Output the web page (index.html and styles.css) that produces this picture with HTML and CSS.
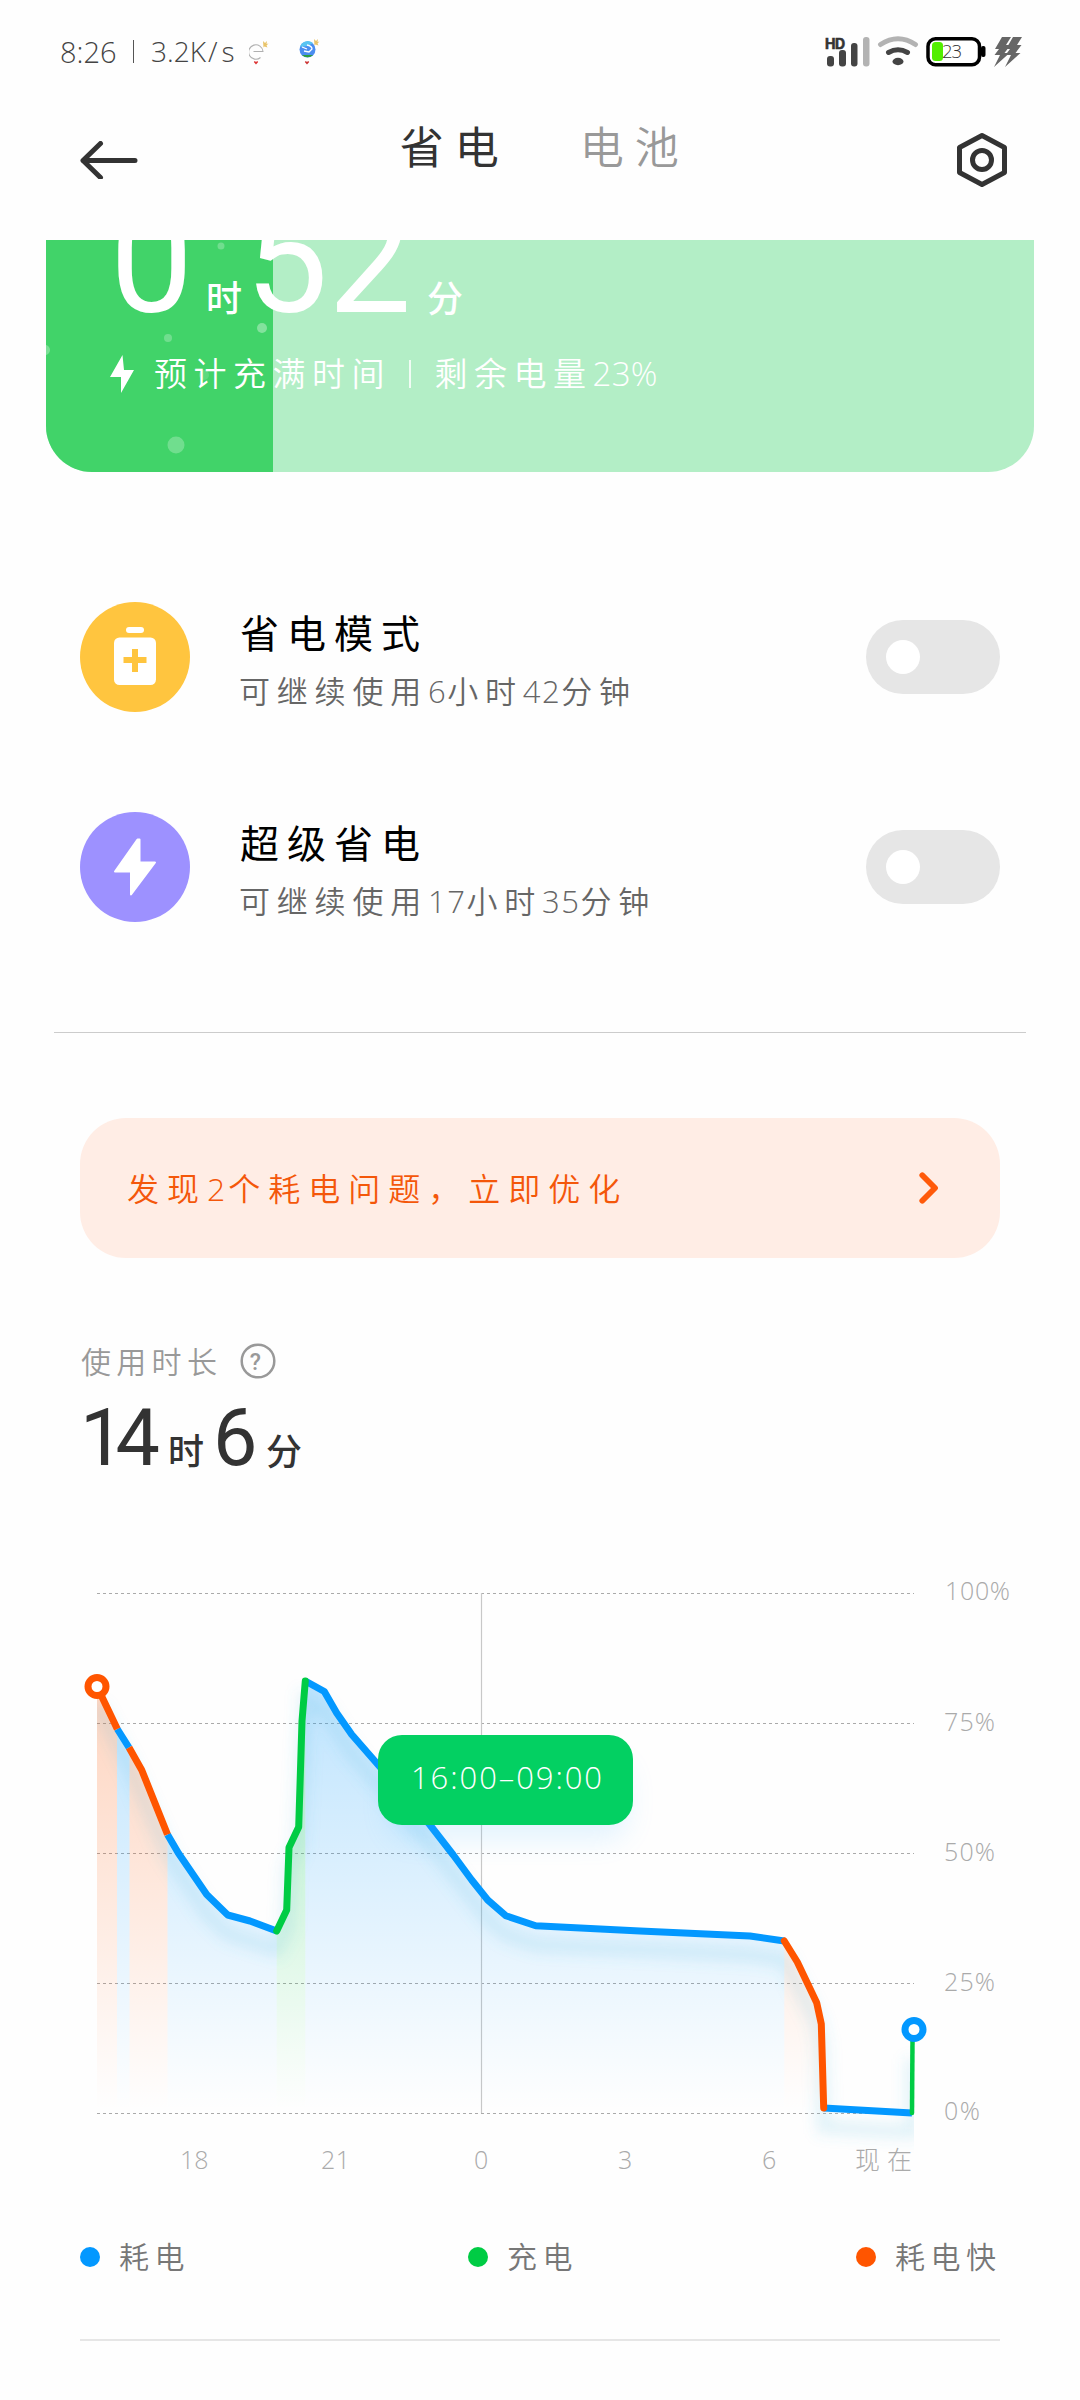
FILE: index.html
```html
<!DOCTYPE html>
<html lang="zh-CN">
<head>
<meta charset="utf-8">
<title>省电</title>
<link rel="stylesheet" href="styles.css">
</head>
<body>
<header class="status">
  <div class="status-left">
    <span class="clock">8:26</span><span class="bar"></span><span class="speed">3.2K<i>/</i>s</span>
    <svg class="note" width="22" height="26" viewBox="0 0 22 26"><path d="M4.500 12.500H14A7.200 7.200 0 1 0 11.500 18.500" fill="none" stroke="#b0b0b0" stroke-width="1.100"/><path d="M14 2l2 2 2-2-.5 3 2-.5-2 2 1 2-3-1-1 1z" fill="#e9c46a"/><path d="M7 25.500l-2.200-2.500 1-1 1.200 1 1.200-1 1 1z" fill="#d33"/></svg>
    <svg class="note" width="22" height="27" viewBox="0 0 22 27"><circle cx="8.500" cy="11.500" r="8" fill="#4b8df0"/><path d="M1 9a8 8 0 0 1 13-4L9 8z" fill="#58c4f2"/><path d="M3 17h11a8 8 0 0 1-11 0z" fill="#2f9e3f"/><path d="M3 9l5 2M8 7q5 1 5 4l-3 3-5-1" fill="none" stroke="#fff" stroke-width="1.300"/><path d="M15 1l2 2 2-2-.5 3 2-.5-2 2 1 2-3-1-1 1z" fill="#e9c46a"/><path d="M8 26.500l-2.200-2.500 1-1 1.200 1 1.200-1 1 1z" fill="#c33"/></svg>
  </div>
  <svg class="status-right" width="200" height="34" viewBox="825 35 200 34">
    <text class="hd" x="825" y="49" textLength="20">HD</text>
    <g fill="#444"><rect x="827" y="56" width="7" height="10.500" rx="3"/><rect x="839" y="50" width="7" height="16.500" rx="3"/><rect x="851" y="43" width="6.500" height="23.500" rx="3"/></g>
    <rect x="863" y="37" width="6.500" height="29.500" rx="3" fill="#b3b3b3"/>
    <path d="M880.500 44.500Q898 33 915.500 44.500" fill="none" stroke="#b3b3b3" stroke-width="5" stroke-linecap="round"/>
    <path d="M888.500 52.500Q898 47 907.500 52.500" fill="none" stroke="#444" stroke-width="5" stroke-linecap="round"/>
    <ellipse cx="898" cy="61.500" rx="5.500" ry="3.700" fill="#444"/>
    <rect x="928" y="38.700" width="51.500" height="26" rx="7.500" fill="#fff" stroke="#000" stroke-width="3.500"/>
    <rect x="981" y="46" width="4.500" height="11" rx="2" fill="#000"/>
    <rect x="932" y="42" width="11" height="19" rx="3.500" fill="#52ee00"/>
    <text class="pct" x="942" y="58" textLength="20">23</text>
    <path d="M1002 37h9l-5 8h4.500l-6 8h5l-15.500 14 6-12h-5.500l4.500-6h-4z" fill="#666"/>
    <path d="M1013 37h9l-5 8h4.500l-6 8h5l-15.500 14 6-12h-5.500l4.500-6h-4z" fill="#666"/>
  </svg>
</header>
<nav class="top">
  <svg width="58" height="38" viewBox="0 0 58 38"><path d="M20.500 2.500L3 19.500 20.500 36.500M3 19.500H55" fill="none" stroke="#333" stroke-width="5" stroke-linecap="round" stroke-linejoin="round"/></svg>
  <div class="tabs"><span class="tab on">省电</span><span class="tab">电池</span></div>
  <svg width="50" height="56" viewBox="0 0 50 56"><path d="M25 3.500L47.500 15.500V40.500L25 52.500 2.500 40.500V15.500Z" fill="none" stroke="#333" stroke-width="5" stroke-linejoin="round"/><circle cx="25" cy="28" r="9.500" fill="none" stroke="#333" stroke-width="5"/></svg>
</nav>
<main>
  <section class="card">
    <svg class="bubbles" width="227" height="232" viewBox="0 0 227 232"><rect width="227" height="232" fill="#41d369"/><g fill="#fff"><circle cx="175" cy="6" r="3.500" opacity=".25"/><circle cx="216" cy="88" r="5" opacity=".35"/><circle cx="122" cy="98" r="4" opacity=".25"/><circle cx="-1" cy="110" r="5" opacity=".3"/><circle cx="158" cy="135" r="5" opacity=".15"/><circle cx="130" cy="205" r="8.500" opacity=".25"/></g></svg>
    <div class="big"><b>0</b><em>时</em><b class="b2">52</b><em class="e2">分</em></div>
    <div class="eta">
      <svg width="24" height="38" viewBox="0 0 24 38"><path d="M12.500 0L0 22H11V38L24 15H14Z" fill="#fff"/></svg>
      <span class="e-a">预计充满时间</span><span class="e-bar"></span><span class="e-b">剩余电量<i>23%</i></span>
    </div>
  </section>
  <section class="mode">
    <svg width="110" height="110" viewBox="0 0 110 110"><circle cx="55" cy="55" r="55" fill="#ffc53f"/><rect x="46" y="25" width="18" height="6" rx="3" fill="#fff"/><rect x="34" y="35.500" width="42" height="47.500" rx="5.500" fill="#fff"/><path d="M43.500 58h23M55 47v23" stroke="#ffc53f" stroke-width="6"/></svg>
    <div class="mode-text"><h2>省电模式</h2><p>可继续使用<i>6</i>小时<i>42</i>分钟</p></div>
    <span class="toggle"></span>
  </section>
  <section class="mode">
    <svg width="110" height="110" viewBox="0 0 110 110"><circle cx="55" cy="55" r="55" fill="#9d91ff"/><path d="M57.500 27.500L35 59.500H51V82.500L75 50.500H59.500V27.500Z" fill="#fff" stroke="#fff" stroke-width="2" stroke-linejoin="round"/></svg>
    <div class="mode-text"><h2>超级省电</h2><p>可继续使用<i>17</i>小时<i>35</i>分钟</p></div>
    <span class="toggle"></span>
  </section>
  <hr class="rule">
  <section class="alert"><span>发现<i>2</i>个耗电问题，立即优化</span><svg width="20" height="32" viewBox="0 0 20 32"><path d="M3.300 3.300L16 16 3.300 28.700" fill="none" stroke="#ff5a0a" stroke-width="5.800" stroke-linecap="round" stroke-linejoin="round"/></svg></section>
  <section class="usage">
    <div class="usage-label"><span>使用时长</span><svg width="36" height="36" viewBox="0 0 36 36"><circle cx="18" cy="18" r="16.300" fill="none" stroke="#999" stroke-width="2.500"/><text class="q" x="18" y="26.500" text-anchor="middle">?</text></svg></div>
    <div class="dur"><b>14</b><em>时</em><b class="b2">6</b><em class="e2">分</em></div>
  </section>
  <section class="chart">
    <svg width="1080" height="640" viewBox="0 1560 1080 640">
      <defs>
        <linearGradient id="gb" gradientUnits="userSpaceOnUse" x1="0" y1="1680" x2="0" y2="2110"><stop offset="0" stop-color="#0096ff" stop-opacity=".25"/><stop offset="1" stop-color="#0096ff" stop-opacity="0"/></linearGradient>
        <linearGradient id="go" gradientUnits="userSpaceOnUse" x1="0" y1="1680" x2="0" y2="2110"><stop offset="0" stop-color="#ff5500" stop-opacity=".25"/><stop offset="1" stop-color="#ff5500" stop-opacity="0"/></linearGradient>
        <linearGradient id="gg" gradientUnits="userSpaceOnUse" x1="0" y1="1680" x2="0" y2="2110"><stop offset="0" stop-color="#00cc44" stop-opacity=".32"/><stop offset="1" stop-color="#00cc44" stop-opacity="0"/></linearGradient>
        <filter id="soft" filterUnits="userSpaceOnUse" x="90" y="1660" width="830" height="500"><feGaussianBlur stdDeviation="7"/></filter>
        <filter id="tip" x="-20%" y="-40%" width="140%" height="200%"><feGaussianBlur stdDeviation="14"/></filter>
        <clipPath id="plot"><rect x="97" y="1600" width="817" height="560"/></clipPath>
      </defs>
      <path d="M97 1593.500H914M97 1723.500H914M97 1853.500H914M97 1983.500H914M97 2113.500H914" stroke="#aaa" stroke-width="1" stroke-dasharray="3 3"/>
      <path d="M481.500 1593V2113" stroke="#c8c8c8" stroke-width="1.200"/>
      <path fill="url(#go)" d="M97 1686.500L117 1729V2113H97ZM129.500 1747.500L141.700 1770 167.500 1834.500V2113H129.500ZM784.300 1941L797.300 1962 816.700 2002.700 821.300 2024 823.700 2108V2113H784.300Z"/>
      <path fill="url(#gb)" d="M117 1729L129.500 1747.500V2113H117ZM167.500 1834.500L178.300 1853 206.700 1894.500 227.700 1915 250 1921 276.700 1931V2113H167.500ZM305.300 1681L324.300 1691.500 336.700 1713 351.700 1734.500 378.300 1765 430 1825 453.300 1855 471.700 1880 487.700 1900 505.700 1915.700 535.700 1925.700 640 1931 750 1936 784.300 1941V2113H305.300Z"/>
      <path fill="url(#gg)" d="M276.700 1931L286.700 1910 289 1847.500 298.700 1827 302 1721 305.300 1681V2113H276.700Z"/>
      <g clip-path="url(#plot)"><path filter="url(#soft)" transform="translate(0 19)" fill="none" stroke="#4ab5dc" stroke-opacity=".16" stroke-width="14" d="M97 1686.500L129 1747.500 167.500 1834.500 206.700 1894.500 227.700 1915 276.700 1931 286.700 1910 289 1847.500 298.700 1827 305.300 1681 324.300 1691.500 351.700 1734.500 430 1825 487.700 1900 505.700 1915.700 535.700 1925.700 750 1936 784.300 1941 816.700 2002.700 821.300 2024 823.700 2108 912 2113V2040"/></g>
      <g fill="none" stroke-width="7" stroke-linejoin="round">
        <path stroke="#0398ff" d="M117.300 1729L129 1747.500M167.500 1834.500L178.300 1853 206.700 1894.500 227.700 1915 250 1921 276.700 1931M305.300 1681L324.300 1691.500 336.700 1713 351.700 1734.500 378.300 1765 430 1825 453.300 1855 471.700 1880 487.700 1900 505.700 1915.700 535.700 1925.700 640 1931 750 1936 784.300 1941M823.700 2108L912 2113"/>
        <g stroke-linecap="round"><path stroke="#00cc44" d="M276.700 1931L286.700 1910 289 1847.500 298.700 1827 302 1721 305.300 1681"/><path stroke="#00cc44" stroke-width="4.500" d="M912 2113L912.500 2041"/></g>
        <path stroke="#ff5500" d="M97 1686.500L117.300 1729M129 1747.500L141.700 1770 167.500 1834.500"/>
        <path stroke="#ff5500" stroke-linecap="round" d="M784.300 1941L797.300 1962 816.700 2002.700 821.300 2024 823.700 2108"/>
      </g>
      <circle cx="97" cy="1686.500" r="9" fill="#fff" stroke="#ff5500" stroke-width="7"/>
      <circle cx="914" cy="2029.500" r="9" fill="#fff" stroke="#0398ff" stroke-width="7"/>
      <rect x="388" y="1760" width="240" height="80" rx="24" fill="#4db8ff" opacity=".15" filter="url(#tip)"/>
      <rect x="378" y="1735" width="255" height="90" rx="24" fill="#03d062"/>
      <text class="tip" x="411" y="1789" textLength="191">16:00–09:00</text>
      <g class="axis">
        <text x="945" y="1600" textLength="65">100%</text><text x="944" y="1730.500" textLength="51">75%</text><text x="944" y="1860.500" textLength="51">50%</text><text x="944" y="1990.500" textLength="51">25%</text><text x="944" y="2120" textLength="36">0%</text>
        <text x="180" y="2168.500">18</text><text x="321" y="2168.500" textLength="29">21</text><text x="474" y="2168.500">0</text><text x="618" y="2168.500">3</text><text x="762" y="2168.500">6</text><text x="855" y="2168.500" textLength="57">现在</text>
      </g>
    </svg>
  </section>
  <section class="legend">
    <span class="key k1">耗电</span><span class="key k2">充电</span><span class="key k3">耗电快</span>
  </section>
  <hr class="end">
</main>
</body>
</html>
```
FILE: styles.css
```css
* { box-sizing: border-box; margin: 0; padding: 0; }
body { width: 1080px; height: 2400px; overflow: hidden; background: #fefefe; font-family: "Open Sans", "Noto Sans CJK SC", sans-serif; font-weight: 350; color: #333; }
svg { display: block; flex: none; }
i, em { font-style: normal; }
.status { height: 104px; padding: 35px 55px 0 60px; display: flex; justify-content: space-between; align-items: flex-start; }
.status-left { display: flex; align-items: center; height: 33px; font-size: 29px; line-height: 33px; color: #444; font-weight: 300; }
.bar { width: 1.500px; height: 23px; margin: 0 17px 0 16px; background: #555; }
.speed { width: 98px; font-size: 28px; white-space: nowrap; }
.speed i { margin: 0 4px 0 2px; }
.note { margin-right: 28px; }
.hd { font: 700 14px "Inter", sans-serif; fill: #333; stroke: #333; stroke-width: .6px; }
.pct { font: 300 18.500px "Open Sans", sans-serif; fill: #333; }
.top { height: 136px; padding: 12px 73px 0 79.500px; display: flex; justify-content: space-between; }
.top > svg:first-child { margin-top: 25px; }
.top > svg:last-child { margin-top: 16px; }
.tabs { display: flex; gap: 70px; margin-left: -5px; }
.tab { font-size: 44px; line-height: 62px; letter-spacing: 11px; color: #999; }
.tab.on { color: #333; font-weight: 400; }
.card { position: relative; height: 232px; margin: 0 46px; overflow: hidden; background: #b3eec6; border-radius: 0 0 46px 46px; color: #fff; display: flex; flex-direction: column; }
.bubbles { position: absolute; left: 0; top: 0; }
.big { position: relative; display: flex; height: 108px; margin-top: -32px; padding-left: 64px; align-items: baseline; line-height: 108px; }
.big b { font: 400 148px/108px "Roboto", sans-serif; width: 94px; }
.big .b2 { width: 172px; margin-left: 3px; }
em { font: 500 36px/40px "Noto Sans CJK SC", sans-serif; width: 36px; }
.big em { margin-left: 2px; }
.big .e2 { margin-left: 10px; }
.eta { position: relative; display: flex; align-items: center; height: 40px; margin: 38px 0 0 64px; font-size: 33px; line-height: 40px; }
.e-a { margin-left: 20px; letter-spacing: 6.500px; width: 237px; }
.e-bar { width: 1.500px; height: 28px; margin: 0 24px 0 18px; background: #fff; opacity: .8; }
.e-b { letter-spacing: 6.500px; }
.e-b i { letter-spacing: .3px; }
.mode { display: flex; align-items: center; margin: 0 80px; height: 110px; }
.card + .mode { margin-top: 130px; }
.mode + .mode { margin-top: 100px; }
.mode-text { flex: 1; margin-left: 50px; padding-top: 7px; }
h2 { font-weight: 400; font-size: 39px; line-height: 56px; letter-spacing: 8px; color: #000; }
.mode-text p { font-size: 31px; line-height: 48px; letter-spacing: 6.800px; color: #666; margin: 6px 0 2px -1px; }
.mode-text p i { letter-spacing: 1.500px; }
.toggle { width: 134px; height: 74px; padding: 20px; border-radius: 37px; background: #e6e6e6; }
.toggle::before { content: ""; display: block; width: 34px; height: 34px; border-radius: 50%; background: #fff; }
hr { border: 0; }
.rule { height: 1px; margin: 110px 54px 0; background: #ccc; }
.alert { height: 140px; margin: 85px 80px 0; padding: 0 61px 0 47px; border-radius: 46px; background: #ffede5; display: flex; align-items: center; justify-content: space-between; font-size: 32px; letter-spacing: 8px; color: #f4570a; }
.alert span { padding-bottom: 3px; }
.alert i { letter-spacing: 3px; }
.usage { padding: 80px 80px 0; height: 302px; }
.usage-label { display: flex; align-items: center; height: 46px; font-size: 30px; color: #999; letter-spacing: 5.300px; }
.usage-label span { width: 160px; padding: 0 0 3px 1px; }
.q { font: 500 23px "Roboto", sans-serif; fill: #999; }
.dur { display: flex; align-items: baseline; margin-top: 14px; line-height: 80px; }
.dur b { font: 400 79px/80px "Roboto", sans-serif; width: 82px; letter-spacing: -9px; }
.dur .b2 { width: 44px; margin-left: 9px; }
.dur em { margin-left: 6px; }
.dur .e2 { margin-left: 9px; }
.chart { height: 640px; }
.tip { font-size: 31px; fill: #fff; }
.axis { font-size: 25px; fill: #aaa; font-weight: 300; }
.legend { display: grid; grid-template-columns: 388px 388px 1fr; padding: 34px 60px 0 80px; }
.key { display: flex; align-items: center; height: 46px; font-size: 30px; line-height: 42px; letter-spacing: 5.500px; color: #777; }
.key::before { content: ""; width: 20px; height: 20px; margin-right: 19px; border-radius: 50%; background: #0398ff; }
.k2::before { background: #00cc44; }
.k3::before { background: #ff5500; }
.end { height: 2px; margin: 59px 80px 0; background: #e6e6e6; }
```
